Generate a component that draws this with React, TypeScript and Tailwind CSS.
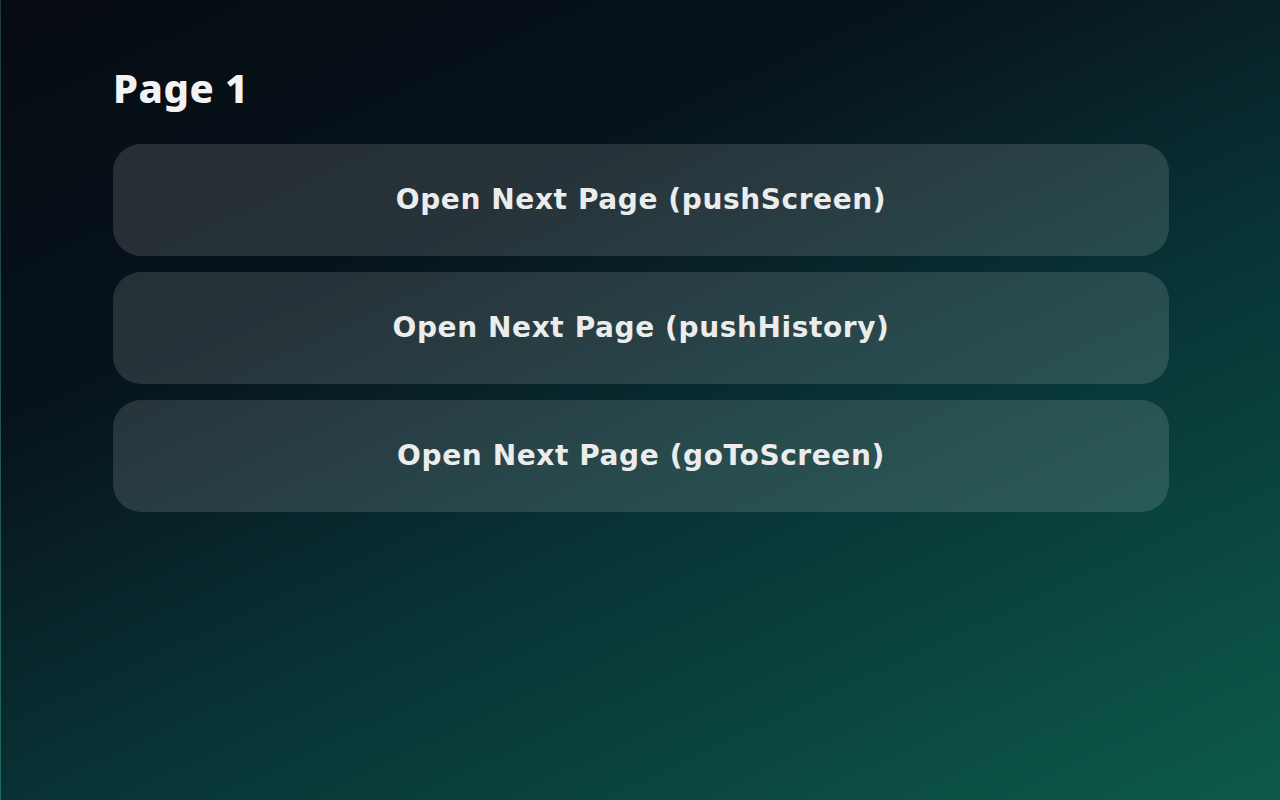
const buttons = ['Open Next Page (pushScreen)', 'Open Next Page (pushHistory)', 'Open Next Page (goToScreen)'];

export default function App() {
  return (
    <div className="min-h-[800px] w-full border-l border-white/10 bg-[linear-gradient(155deg,#070b13_0%,#07131b_30%,#083235_58%,#0d5a49_100%)] pl-[112px] pr-[111px] pt-[64px]">
      <h1 className="font-['Noto_Sans',sans-serif] text-[40px] font-extrabold leading-[48px] tracking-[0.5px] text-[#f3f3f3]">Page 1</h1>
      <div className="mt-[32px] flex flex-col gap-4">
        {buttons.map((label) => (
          <button
            key={label}
            className="flex h-[112px] w-full items-center justify-center rounded-[28px] bg-white/[0.13] font-['DejaVu_Sans',sans-serif] text-[28px] font-bold tracking-[0.6px] text-[#ececec]"
          >
            {label}
          </button>
        ))}
      </div>
    </div>
  );
}
